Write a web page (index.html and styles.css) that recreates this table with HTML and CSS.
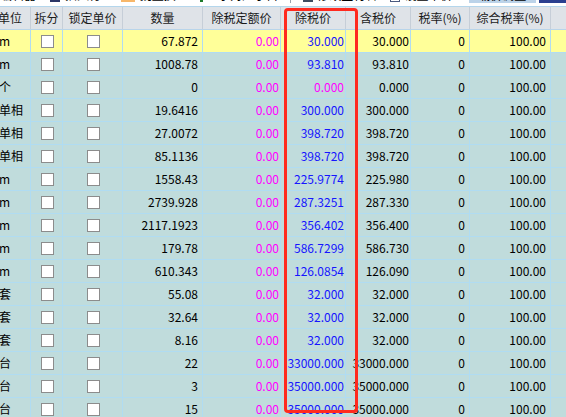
FILE: index.html
```html
<!DOCTYPE html>
<html lang="zh">
<head>
<meta charset="utf-8">
<link rel="stylesheet" href="styles.css">
</head>
<body>
<div class="page">
  <div class="toolbar">
    <div class="tb-inner">
      <span class="tb-text">编辑器</span>
      <span class="ico navy"></span><span class="tb-text">插入行</span>
      <span class="ico orange"></span><span class="tb-text">批量换</span>
      <span class="ico green"></span><span class="tb-text">显示对应子目</span>
      <span class="sep"></span>
      <span class="ico dark"></span><span class="tb-text">修改主材名</span>
      <span class="ico box"></span><span class="tb-text">设置单价</span>
      <span class="btn light"><span class="tb-text">载价调整</span></span>
      <span class="btn navybtn"></span>
    </div>
  </div>
  <div class="grid">
    <div class="row head">
      <div class="c">单位</div><div class="c">拆分</div><div class="c">锁定单价</div><div class="c">数量</div><div class="c">除税定额价</div><div class="c">除税价</div><div class="c">含税价</div><div class="c">税率(%)</div><div class="c">综合税率(%)</div><div class="c"></div>
    </div>
    <div class="row data sel">
      <div class="c unit">m</div><div class="c"><span class="chk"></span></div><div class="c"><span class="chk"></span></div><div class="c num p4">67.872</div><div class="c num p1 mag">0.00</div><div class="c num p1 blue">30.000</div><div class="c num p1">30.000</div><div class="c num p4">0</div><div class="c num p4">100.00</div><div class="c"></div>
    </div>
    <div class="row data">
      <div class="c unit">m</div><div class="c"><span class="chk"></span></div><div class="c"><span class="chk"></span></div><div class="c num p4">1008.78</div><div class="c num p1 mag">0.00</div><div class="c num p1 blue">93.810</div><div class="c num p1">93.810</div><div class="c num p4">0</div><div class="c num p4">100.00</div><div class="c"></div>
    </div>
    <div class="row data">
      <div class="c unit">个</div><div class="c"><span class="chk"></span></div><div class="c"><span class="chk"></span></div><div class="c num p4">0</div><div class="c num p1 mag">0.00</div><div class="c num p1 mag">0.000</div><div class="c num p1">0.000</div><div class="c num p4">0</div><div class="c num p4">100.00</div><div class="c"></div>
    </div>
    <div class="row data">
      <div class="c unit">单相</div><div class="c"><span class="chk"></span></div><div class="c"><span class="chk"></span></div><div class="c num p4">19.6416</div><div class="c num p1 mag">0.00</div><div class="c num p1 blue">300.000</div><div class="c num p1">300.000</div><div class="c num p4">0</div><div class="c num p4">100.00</div><div class="c"></div>
    </div>
    <div class="row data">
      <div class="c unit">单相</div><div class="c"><span class="chk"></span></div><div class="c"><span class="chk"></span></div><div class="c num p4">27.0072</div><div class="c num p1 mag">0.00</div><div class="c num p1 blue">398.720</div><div class="c num p1">398.720</div><div class="c num p4">0</div><div class="c num p4">100.00</div><div class="c"></div>
    </div>
    <div class="row data">
      <div class="c unit">单相</div><div class="c"><span class="chk"></span></div><div class="c"><span class="chk"></span></div><div class="c num p4">85.1136</div><div class="c num p1 mag">0.00</div><div class="c num p1 blue">398.720</div><div class="c num p1">398.720</div><div class="c num p4">0</div><div class="c num p4">100.00</div><div class="c"></div>
    </div>
    <div class="row data">
      <div class="c unit">m</div><div class="c"><span class="chk"></span></div><div class="c"><span class="chk"></span></div><div class="c num p4">1558.43</div><div class="c num p1 mag">0.00</div><div class="c num p1 blue">225.9774</div><div class="c num p1">225.980</div><div class="c num p4">0</div><div class="c num p4">100.00</div><div class="c"></div>
    </div>
    <div class="row data">
      <div class="c unit">m</div><div class="c"><span class="chk"></span></div><div class="c"><span class="chk"></span></div><div class="c num p4">2739.928</div><div class="c num p1 mag">0.00</div><div class="c num p1 blue">287.3251</div><div class="c num p1">287.330</div><div class="c num p4">0</div><div class="c num p4">100.00</div><div class="c"></div>
    </div>
    <div class="row data">
      <div class="c unit">m</div><div class="c"><span class="chk"></span></div><div class="c"><span class="chk"></span></div><div class="c num p4">2117.1923</div><div class="c num p1 mag">0.00</div><div class="c num p1 blue">356.402</div><div class="c num p1">356.400</div><div class="c num p4">0</div><div class="c num p4">100.00</div><div class="c"></div>
    </div>
    <div class="row data">
      <div class="c unit">m</div><div class="c"><span class="chk"></span></div><div class="c"><span class="chk"></span></div><div class="c num p4">179.78</div><div class="c num p1 mag">0.00</div><div class="c num p1 blue">586.7299</div><div class="c num p1">586.730</div><div class="c num p4">0</div><div class="c num p4">100.00</div><div class="c"></div>
    </div>
    <div class="row data">
      <div class="c unit">m</div><div class="c"><span class="chk"></span></div><div class="c"><span class="chk"></span></div><div class="c num p4">610.343</div><div class="c num p1 mag">0.00</div><div class="c num p1 blue">126.0854</div><div class="c num p1">126.090</div><div class="c num p4">0</div><div class="c num p4">100.00</div><div class="c"></div>
    </div>
    <div class="row data">
      <div class="c unit">套</div><div class="c"><span class="chk"></span></div><div class="c"><span class="chk"></span></div><div class="c num p4">55.08</div><div class="c num p1 mag">0.00</div><div class="c num p1 blue">32.000</div><div class="c num p1">32.000</div><div class="c num p4">0</div><div class="c num p4">100.00</div><div class="c"></div>
    </div>
    <div class="row data">
      <div class="c unit">套</div><div class="c"><span class="chk"></span></div><div class="c"><span class="chk"></span></div><div class="c num p4">32.64</div><div class="c num p1 mag">0.00</div><div class="c num p1 blue">32.000</div><div class="c num p1">32.000</div><div class="c num p4">0</div><div class="c num p4">100.00</div><div class="c"></div>
    </div>
    <div class="row data">
      <div class="c unit">套</div><div class="c"><span class="chk"></span></div><div class="c"><span class="chk"></span></div><div class="c num p4">8.16</div><div class="c num p1 mag">0.00</div><div class="c num p1 blue">32.000</div><div class="c num p1">32.000</div><div class="c num p4">0</div><div class="c num p4">100.00</div><div class="c"></div>
    </div>
    <div class="row data">
      <div class="c unit">台</div><div class="c"><span class="chk"></span></div><div class="c"><span class="chk"></span></div><div class="c num p4">22</div><div class="c num p1 mag">0.00</div><div class="c num p1 blue">33000.000</div><div class="c num p1">33000.000</div><div class="c num p4">0</div><div class="c num p4">100.00</div><div class="c"></div>
    </div>
    <div class="row data">
      <div class="c unit">台</div><div class="c"><span class="chk"></span></div><div class="c"><span class="chk"></span></div><div class="c num p4">3</div><div class="c num p1 mag">0.00</div><div class="c num p1 blue">35000.000</div><div class="c num p1">35000.000</div><div class="c num p4">0</div><div class="c num p4">100.00</div><div class="c"></div>
    </div>
    <div class="row data">
      <div class="c unit">台</div><div class="c"><span class="chk"></span></div><div class="c"><span class="chk"></span></div><div class="c num p4">15</div><div class="c num p1 mag">0.00</div><div class="c num p1 blue">35000.000</div><div class="c num p1">35000.000</div><div class="c num p4">0</div><div class="c num p4">100.00</div><div class="c"></div>
    </div>
  </div>
  <div class="redbox"></div>
</div>
</body>
</html>
```

FILE: styles.css
```css
html, body {
  margin: 0;
  padding: 0;
  background: #ffffff;
  overflow: hidden;
}
body {
  width: 566px;
  height: 417px;
  font-family: "Noto Sans CJK SC", "Microsoft YaHei", sans-serif;
  font-size: 12px;
  color: #000;
}
.page {
  position: relative;
  width: 566px;
  height: 417px;
  overflow: hidden;
}
.toolbar {
  height: 6px;
  border-bottom: 1px solid #b4d6ec;
  overflow: hidden;
  background: #fff;
}
.tb-inner {
  display: flex;
  align-items: center;
  height: 16px;
  margin-top: -13px;
  white-space: nowrap;
}
.tb-text {
  font-size: 12px;
  line-height: 16px;
  color: #000;
}
.ico {
  display: inline-block;
  height: 14px;
  margin-right: 5px;
}
.navy { width: 11px; background: #2a3566; margin-left: 14px; }
.orange { width: 15px; background: #f7b76a; margin-left: 20px; }
.green { width: 4px; background: #1e7a2a; margin-left: 24px; margin-right: 3px; }
.sep { display: inline-block; width: 1px; height: 16px; background: #9aa3ad; margin-left: 12px; }
.dark { width: 11px; background: #3d4c60; margin-left: 12px; margin-right: 4px; }
.box { width: 8px; height: 12px; border: 1px solid #4a5a80; background: #fff; margin-left: 13px; margin-right: 5px; }
.btn { display: inline-flex; justify-content: center; height: 16px; }
.light { width: 74px; background: #bcd3e9; margin-left: 16px; }
.navybtn { width: 30px; background: #2b3f8f; margin-left: 3px; }

.grid {
  margin-left: -10px;
}
.row {
  display: grid;
  grid-template-columns: 41px 32px 60px 80px 78px 65px 65px 59px 81px 60px;
  height: 23px;
  box-sizing: border-box;
}
.c {
  box-sizing: border-box;
  overflow: hidden;
  white-space: nowrap;
  line-height: 22px;
}
.head {
  background: #dfe3e8;
  border-bottom: 1px solid #b8d4ea;
}
.head .c {
  border-right: 1px solid #c6ced8;
  text-align: center;
  color: #1a1a1a;
}
.data {
  background: #c0dcdc;
  border-bottom: 1px solid #b0dcf2;
}
.data.sel { background: #ffff99; }
.data .c {
  border-right: 1px solid #b0dcf2;
  display: flex;
  align-items: center;
  justify-content: center;
}
.data .c.unit { justify-content: flex-start; padding-left: 9px; }
.data .c.num { justify-content: flex-end; }
.p1 { padding-right: 1px; }
.p4 { padding-right: 4px; }
.mag { color: #ff00ff; }
.blue { color: #1515ff; }
.chk {
  width: 13px;
  height: 13px;
  box-sizing: border-box;
  border: 1px solid #8c8c8c;
  background: #fff;
  margin-left: 1px;
}
.redbox {
  position: absolute;
  left: 284px;
  top: 8px;
  width: 74px;
  height: 405px;
  box-sizing: border-box;
  border: 3px solid #ff2a1f;
  border-radius: 4px;
}
```
